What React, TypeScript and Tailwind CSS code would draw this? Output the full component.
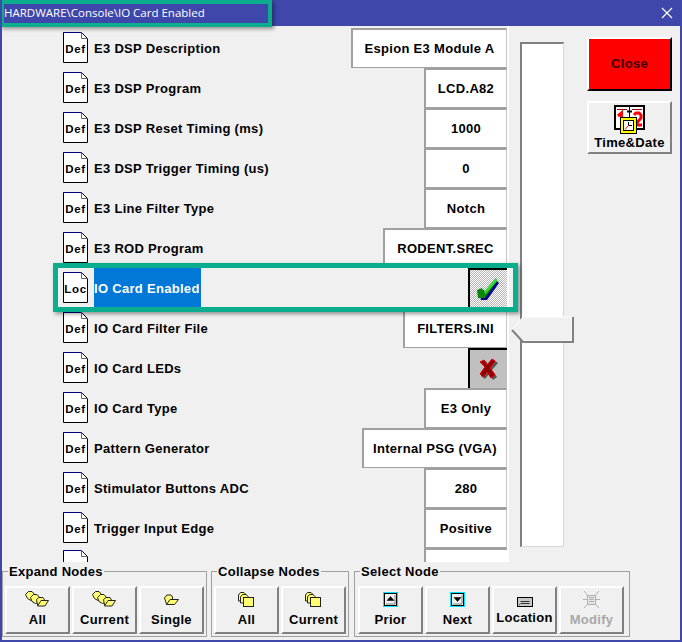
import React from "react";

const font = "[font-family:'Liberation_Sans',Arial,sans-serif]";
const label = "text-[13px] font-bold tracking-[0.3px]";
const yellow = "#ffff70";

const rows: { name: string; value?: string; w?: number; kind?: "check" | "x"; tag?: string }[] = [
  { name: "E3 DSP Description", value: "Espion E3 Module A", w: 156 },
  { name: "E3 DSP Program", value: "LCD.A82", w: 83 },
  { name: "E3 DSP Reset Timing (ms)", value: "1000", w: 83 },
  { name: "E3 DSP Trigger Timing (us)", value: "0", w: 83 },
  { name: "E3 Line Filter Type", value: "Notch", w: 83 },
  { name: "E3 ROD Program", value: "RODENT.SREC", w: 124 },
  { name: "IO Card Enabled", kind: "check", tag: "Loc" },
  { name: "IO Card Filter File", value: "FILTERS.INI", w: 104 },
  { name: "IO Card LEDs", kind: "x" },
  { name: "IO Card Type", value: "E3 Only", w: 83 },
  { name: "Pattern Generator", value: "Internal PSG (VGA)", w: 145 },
  { name: "Stimulator Buttons ADC", value: "280", w: 83 },
  { name: "Trigger Input Edge", value: "Positive", w: 83 },
];

function DocIcon({ tag = "Def" }: { tag?: string }) {
  return (
    <div className="relative w-[25px] h-[31px] shrink-0 -mt-[1px]">
      <svg width="25" height="31" viewBox="0 0 25 31" className="absolute left-0 top-0">
        <path d="M.5 .5H18.5L24.5 6.5V30.5H.5Z" fill="#fff" stroke="#000" />
        <path d="M.5 .5H18" stroke="#000080" />
        <path d="M18.5 .5V6.5H24.5" fill="none" stroke="#666" />
      </svg>
      <span className="absolute left-0 right-0 top-[10px] text-center text-[11.5px] leading-[14px] font-bold text-black tracking-[0.7px]">{tag}</span>
    </div>
  );
}

function Check() {
  return (
    <svg width="23" height="23" viewBox="0 0 23 23">
      <path d="M2 14 L7 12 L9 16 L20 3 L22 5 L10 22 L4 22Z" fill="#000090" />
      <path d="M0 12 L5 10 L7 14 L19 0 L20 3 L8 20 L1 20Z" fill="#0a860a" />
      <path d="M7 14 L19 0 L20 3 L8.5 16Z" fill="#30e030" />
    </svg>
  );
}

function XMark() {
  return (
    <svg width="20" height="22" viewBox="0 0 20 22">
      <path d="M3 5 L7 3 L10 8 L15 2 L19 5 L13 12 L18 19 L14 22 L10 16 L6 21 L2 18 L7 11Z" fill="#555" />
      <path d="M1 4 L5 2 L8 7 L13 1 L16 3 L11 10 L16 17 L12 20 L8 14 L4 19 L1 16 L6 9Z" fill="#8c0000" stroke="#e00000" strokeWidth="1" />
    </svg>
  );
}

function Row({ r }: { r: (typeof rows)[number] }) {
  const selected = r.kind === "check";
  return (
    <div className="flex items-center h-10 pl-[61px]">
      <DocIcon tag={r.tag} />
      <div className={`ml-[6px] h-10 flex items-center pt-[1px] pr-[1px] ${label} ${selected ? "bg-[#0078d7] text-white" : "text-black"}`}>
        {r.name}
      </div>
      <div className="flex-1" />
      {r.value && (
        <div
          className={`h-10 flex items-center justify-center bg-white border-l-2 border-t-2 border-[#a0a0a0] border-b border-b-[#a0a0a0] border-r border-r-[#c8c8c8] ${label} text-black`}
          style={{ width: r.w }}
        >
          {r.value}
        </div>
      )}
      {r.kind === "check" && (
        <div className="w-[39px] h-10 flex items-center justify-center border-l-2 border-t-2 border-black bg-[repeating-conic-gradient(#b4b4b4_0_25%,#fff_0_50%)] bg-[length:2px_2px]">
          <Check />
        </div>
      )}
      {r.kind === "x" && (
        <div className="w-[39px] h-10 flex items-center justify-center border-l-2 border-t-2 border-black bg-[#c0c0c0]">
          <XMark />
        </div>
      )}
    </div>
  );
}

function Btn({ text, icon, disabled, raised }: { text: string; icon: React.ReactNode; disabled?: boolean; raised?: boolean }) {
  return (
    <div className="w-[65px] h-[48px] bg-[#f0f0f0] border-2 border-t-white border-l-white border-r-[#808080] border-b-[#808080] flex flex-col items-center pt-[2px] shrink-0">
      <div className="h-[19px] flex items-center justify-center">{icon}</div>
      <div className={`${raised ? "mt-0" : "mt-[2px]"} leading-[18px] ${label} ${disabled ? "text-[#a8a8a8]" : "text-black"}`}>{text}</div>
    </div>
  );
}

function Folders() {
  return (
    <svg width="25" height="17" viewBox="0 0 25 17">
      <path d="M.5 3.5 L3.5 .5 H7 L10.5 4.5 V8 L6 9.5 L2.5 7.5Z" fill={yellow} stroke="#222" />
      <path d="M5.5 6.5 L8.5 3.5 H12 L15.5 7.5 V11 L10.5 12.5 L7 10.5Z" fill={yellow} stroke="#222" />
      <path d="M11.5 8.5 L14 6.5 H18 L19.5 9 V14 H12.5Z" fill={yellow} stroke="#222" />
      <path d="M12.5 15 L16 9.5 H23.5 L20 15Z" fill={yellow} stroke="#222" />
    </svg>
  );
}

function Folder() {
  return (
    <svg width="15" height="11" viewBox="0 0 15 11">
      <path d="M.5 4 L3 1 H7 L8.5 3 V10 H2.5Z" fill={yellow} stroke="#222" />
      <path d="M2.5 10.5 L6 5.5 H14.5 L10.5 10.5Z" fill={yellow} stroke="#222" />
    </svg>
  );
}

function Stack() {
  return (
    <svg width="17" height="15" viewBox="0 0 17 15">
      <path d="M.5 3 L2.5 .5 H6 L8 2.5 V9 H.5Z" fill={yellow} stroke="#222" />
      <path d="M2.5 5 L4.5 2.5 H8 L10 4.5 V11 H2.5Z" fill={yellow} stroke="#222" />
      <rect x="5.5" y="5.5" width="10" height="9" fill={yellow} stroke="#222" />
    </svg>
  );
}

function Arrow({ up }: { up?: boolean }) {
  return (
    <svg width="15" height="15" viewBox="0 0 15 15">
      <rect x="0.5" y="0.5" width="14" height="14" fill="#00e5ff" stroke="#00e5ff" />
      <rect x="1.5" y="1.5" width="12" height="12" fill="#f0f0f0" stroke="#000" />
      <path d="M3 12 H12 V3" stroke="#808080" fill="none" />
      <path d={up ? "M7.5 4.5 L11 8.5 H4Z" : "M7.5 9.5 L11 5.5 H4Z"} fill="#000" stroke="#000" strokeWidth="0.5" />
    </svg>
  );
}

function Location() {
  return (
    <svg width="16" height="10" viewBox="0 0 16 10" className="mt-[5px]">
      <rect x="0.5" y="0.5" width="15" height="9" fill="#c8c8c8" stroke="#000" />
      <path d="M3.5 4.5 H12.5 M3.5 6.5 H12.5" stroke="#333" />
      <rect x="2" y="7" width="1" height="1" fill="#f00" />
    </svg>
  );
}

function Modify() {
  return (
    <svg width="17" height="17" viewBox="0 0 17 17" fill="none" stroke="#b0b0b0">
      <rect x="4.5" y="4.5" width="8" height="9" fill="#e4e4e4" />
      <path d="M6 6.5 H11 M6 8.5 H11 M6 10.5 H11 M1 0 L4.5 4 M16 0 L12.5 4 M0 8.5 H4.5 M12.5 8.5 H17 M1 17 L4.5 13.5 M16 17 L12.5 13.5" />
    </svg>
  );
}

function Calendar() {
  return (
    <svg width="31" height="29" viewBox="0 0 31 29">
      <rect x="1" y="1" width="29" height="23" fill="#fff" stroke="#000" strokeWidth="2" />
      <path d="M3 4.5 H13 M18 4.5 H28" stroke="#900" />
      <path d="M15.5 1 V24" stroke="#000" />
      <path d="M13 6.5 H18" stroke="#000" strokeWidth="2" />
      <path d="M4 11 L7.5 8 V22" stroke="#f00" strokeWidth="3" fill="none" />
      <path d="M20 10 L22 8 H25 L27 10 V13 L21 20 H28" stroke="#f00" strokeWidth="3" fill="none" />
      <rect x="6.5" y="12.5" width="16" height="16" fill="#ffff00" stroke="#000" />
      <rect x="9.5" y="15.5" width="10" height="10" fill="#fff" stroke="#000" />
      <path d="M14.5 17 V20.5 H18" stroke="#000" fill="none" />
      <path d="M14.5 20.5 L11 24.5" stroke="#f00" fill="none" />
    </svg>
  );
}

function Group({ title, className, children }: { title: string; className: string; children: React.ReactNode }) {
  return (
    <div className={`relative h-[66px] border border-[#a0a0a0] flex items-end gap-[2px] pb-[2px] shrink-0 ${className}`}>
      <span className={`absolute left-[5px] -top-[9px] bg-[#f0f0f0] px-[1px] leading-[18px] ${label} text-black`}>{title}</span>
      {children}
    </div>
  );
}

export default function App() {
  return (
    <div className={`${font} relative w-[682px] h-[642px] bg-[#f0f0f0] overflow-hidden flex flex-col border-l-2 border-r-2 border-b-2 border-[#3f47ab]`}>
      <div className="-mx-[2px] h-[26px] shrink-0 bg-[#3f47ab] flex items-center justify-between pl-[4px] pr-[9px] text-white">
        <span className="font-['Open_Sans',sans-serif] text-[11.5px]">HARDWARE\Console\IO Card Enabled</span>
        <svg width="12" height="12" viewBox="0 0 12 12" stroke="#fff" strokeWidth="1.2"><path d="M1 1 L11 11 M11 1 L1 11" /></svg>
      </div>
      <div className="flex flex-1 min-h-0 items-start">
        <div className="w-[505px] h-[536px] overflow-hidden pt-[2px] shrink-0">
          {rows.map((r) => (
            <Row key={r.name} r={r} />
          ))}
          <div className="flex items-start h-10 pl-[61px] pt-[3px]">
            <DocIcon tag="" />
            <div className="flex-1" />
            <div className="w-[83px] h-10 -mt-[3px] bg-white border-l-2 border-t-2 border-[#a0a0a0]" />
          </div>
        </div>
        <div className="w-[2px] h-[536px] bg-white shrink-0" />
        <div className="relative ml-[11px] mt-[16px] w-[44px] h-[505px] bg-white border-l-2 border-t-2 border-[#808080] border-r border-b border-r-[#d8d8d8] border-b-[#d8d8d8] shrink-0">
          <svg width="63" height="27" viewBox="0 0 63 27" className="absolute -left-[11px] top-[272px]">
            <path d="M1 14 L12 1 H61 V25 H12Z" fill="#f0f0f0" stroke="#fff" />
            <path d="M1 14 L12 26 H62 V1" fill="none" stroke="#808080" strokeWidth="2" />
          </svg>
        </div>
        <div className="ml-[23px] mt-[11px] flex flex-col gap-[10px] shrink-0">
          <div className={`w-[85px] h-[54px] bg-[#ff0000] border-2 border-t-white border-l-white border-r-black border-b-black flex items-center justify-center ${label} text-[#3a0000]`}>Close</div>
          <div className="w-[85px] h-[53px] bg-[#f0f0f0] border-2 border-t-white border-l-white border-r-[#808080] border-b-[#808080] flex flex-col items-center pt-[2px]">
            <Calendar />
            <span className={`leading-[18px] ${label} text-black`}>Time&amp;Date</span>
          </div>
        </div>
      </div>
      <div className="absolute left-0 top-[571px] flex">
        <Group title="Expand Nodes" className="w-[205px] pl-[2px]">
          <Btn text="All" icon={<Folders />} />
          <Btn text="Current" icon={<Folders />} />
          <Btn text="Single" icon={<Folder />} />
        </Group>
        <Group title="Collapse Nodes" className="w-[138px] ml-[4px] pl-[2px]">
          <Btn text="All" icon={<Stack />} />
          <Btn text="Current" icon={<Stack />} />
        </Group>
        <Group title="Select Node" className="w-[276px] ml-[5px] pl-[3px]">
          <Btn text="Prior" icon={<Arrow up />} />
          <Btn text="Next" icon={<Arrow />} />
          <Btn text="Location" icon={<Location />} raised />
          <Btn text="Modify" icon={<Modify />} disabled />
        </Group>
      </div>
      <div className="absolute -left-[2px] top-0 w-[272px] h-[27px] border-[4px] border-[#0aae8f] shadow-[2px_2px_4px_rgba(0,0,0,0.4)]" />
      <div className="absolute left-[51px] top-[263px] w-[465px] h-[49px] border-[5px] border-[#0aae8f] shadow-[2px_2px_4px_rgba(0,0,0,0.4)]" />
    </div>
  );
}
